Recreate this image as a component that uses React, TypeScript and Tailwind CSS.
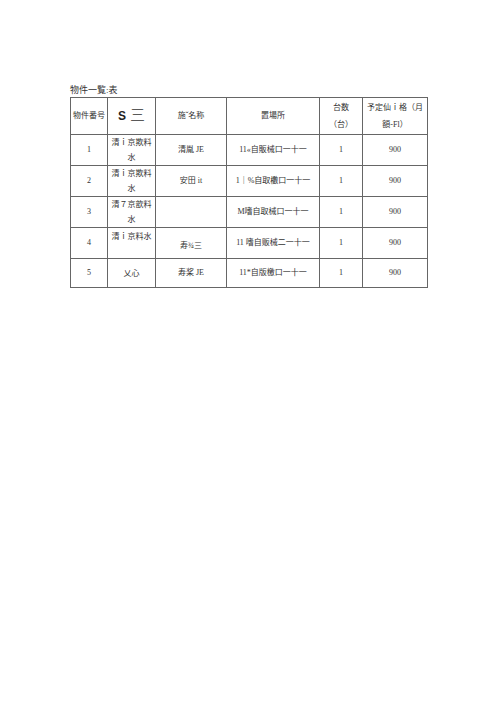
const rows = [
  { no: "1", name: ["清ｉ京欺料", "水"], maker: "清胤 JE", place: "11«自販械口一十一", qty: "1", price: "900" },
  { no: "2", name: ["清ｉ京欺料", "水"], maker: "安田 it", place: "1｜%自取櫢口一十一", qty: "1", price: "900" },
  { no: "3", name: ["清７京歆料", "水"], maker: "", place: "M嗜自取械口一十一", qty: "1", price: "900" },
  { no: "4", name: ["清ｉ京料水"], maker: "寿¾三", place: "11 嗜自贩械二一十一", qty: "1", price: "900", top: true },
  { no: "5", name: ["乂心"], maker: "寿桨 JE", place: "11*自版檄口一十一", qty: "1", price: "900" },
];

const heights = ["h-[31px]", "h-[31px]", "h-[31px]", "h-[31px]", "h-[29px]"];

export default function App() {
  return (
    <div className="w-[500px] h-[707px] bg-white text-[#333] font-['Liberation_Serif','Noto_Sans_CJK_JP',serif]">
      <div className="pt-[84px] pl-[70px]">
        <div className="text-[9px] leading-[12px] mb-px">物件一覧:表</div>
        <table className="border-collapse text-[8px] leading-[14px] text-center table-fixed">
          <colgroup>
            <col className="w-[37px]" />
            <col className="w-[48px]" />
            <col className="w-[71px]" />
            <col className="w-[93px]" />
            <col className="w-[43px]" />
            <col className="w-[65px]" />
          </colgroup>
          <tbody>
            <tr className="h-[37px]">
              <td className="border border-[#666] p-0">物件番号</td>
              <td className="border border-[#666] p-0">
                <span className="font-['Liberation_Sans',sans-serif] font-bold text-[12px] text-[#222]">S</span>
                <span className="text-[15px] ml-1 font-light">三</span>
              </td>
              <td className="border border-[#666] p-0">施ˇ名称</td>
              <td className="border border-[#666] p-0">置場所</td>
              <td className="border border-[#666] p-0 leading-[17px]">
                台数
                <br />（台）
              </td>
              <td className="border border-[#666] p-0 leading-[17px]">
                予定仙ｉ格（月
                <br />額-Fl）
              </td>
            </tr>
            {rows.map((r, i) => (
              <tr key={r.no} className={heights[i]}>
                <td className="border border-[#666] p-0">{r.no}</td>
                <td className={`border border-[#666] p-0 leading-[15px] ${r.top ? "align-top pt-px" : ""}`}>
                  {r.name.map((l, j) => (
                    <div key={j}>{l}</div>
                  ))}
                </td>
                <td className={`border border-[#666] p-0 ${r.top ? "align-bottom pb-[5px]" : ""}`}>{r.maker}</td>
                <td className="border border-[#666] p-0 whitespace-nowrap">{r.place}</td>
                <td className="border border-[#666] p-0">{r.qty}</td>
                <td className="border border-[#666] p-0">{r.price}</td>
              </tr>
            ))}
          </tbody>
        </table>
      </div>
    </div>
  );
}
